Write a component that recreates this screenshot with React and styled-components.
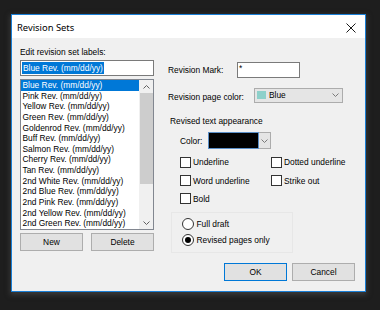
import React from "react";
import styled, { createGlobalStyle } from "styled-components";

const Global = createGlobalStyle`
  html, body { margin: 0; padding: 0; background: #1e1e1e; }
  body { width: 380px; height: 310px; overflow: hidden; font-family: "Liberation Sans", Arial, sans-serif; }
  * { box-sizing: border-box; }
`;

const UI_FONT = `font-family: "Liberation Sans", Arial, sans-serif; font-size: 8.4px; color: #000;`;

const Desktop = styled.div`
  padding: 14px 0 0 11px;
`;

const Dialog = styled.div`
  width: 355px;
  height: 278px;
  border: 1px solid #1a7fd6;
  background: #f0f0f0;
  display: flex;
  flex-direction: column;
  box-shadow: 0 2px 5px 1px rgba(80, 80, 80, 0.55);
`;

const TitleBar = styled.div`
  height: 23px;
  background: #fff;
  display: flex;
  align-items: center;
  justify-content: space-between;
  padding: 0 9px 0 5px;
`;

const Title = styled.div`
  font-family: "Noto Sans", "Liberation Sans", sans-serif;
  font-size: 9.4px;
  color: #000;
  padding-top: 1px;
`;

const CloseIcon = styled.svg`
  width: 10px;
  height: 10px;
  margin-top: 2px;
`;

const Body = styled.div`
  flex: 1;
  display: flex;
  gap: 14px;
  padding: 0 10px 0 8px;
`;

const LeftCol = styled.div`
  width: 134px;
  padding-top: 9px;
  display: flex;
  flex-direction: column;
`;

const Label = styled.div`
  ${UI_FONT}
  line-height: 11px;
  height: 11px;
  white-space: nowrap;
  padding-left: ${(p) => p.$indent || 0}px;
  margin-top: ${(p) => p.$mt || 0}px;
`;

const TextBox = styled.div`
  ${UI_FONT}
  margin-top: ${(p) => p.$mt || 0}px;
  width: ${(p) => (p.$w ? `${p.$w}px` : "auto")};
  height: 16px;
  border: 1px solid #7a7a7a;
  background: #fff;
  display: flex;
  align-items: ${(p) => (p.$top ? "flex-start" : "center")};
  padding-left: 1px;
`;

const Selected = styled.span`
  background: #0078d7;
  color: #fff;
  line-height: 12px;
  padding: 0 1px;
`;

const ListBox = styled.div`
  margin-top: 3px;
  height: 151px;
  border: 1px solid #828790;
  background: #fff;
  display: flex;
`;

const Items = styled.div`
  flex: 1;
  display: flex;
  flex-direction: column;
  overflow: hidden;
`;

const Item = styled.div`
  ${UI_FONT}
  height: 10.64px;
  line-height: 10.64px;
  padding-left: 1.5px;
  white-space: nowrap;
  background: ${(p) => (p.$sel ? "#0078d7" : "transparent")};
  color: ${(p) => (p.$sel ? "#fff" : "#000")};
`;

const ScrollBar = styled.div`
  width: 14px;
  background: #f0f0f0;
  display: flex;
  flex-direction: column;
  align-items: center;
`;

const ArrowCell = styled.div`
  height: 13px;
  width: 100%;
  display: flex;
  align-items: center;
  justify-content: center;
`;

const Thumb = styled.div`
  width: 13px;
  height: 91px;
  background: #cdcdcd;
`;

const Spacer = styled.div`
  flex: 1;
`;

const ButtonRow = styled.div`
  margin-top: ${(p) => p.$mt || 0}px;
  display: flex;
  justify-content: ${(p) => p.$justify || "space-between"};
  gap: ${(p) => p.$gap || 0}px;
`;

const Button = styled.div`
  ${UI_FONT}
  width: 63px;
  height: 18px;
  background: #e1e1e1;
  border: 1px solid ${(p) => (p.$default ? "#0078d7" : "#adadad")};
  display: flex;
  align-items: center;
  justify-content: center;
`;

const RightCol = styled.div`
  flex: 1;
  padding-top: 24px;
  display: flex;
  flex-direction: column;
`;

const FieldRow = styled.div`
  display: flex;
  align-items: center;
  height: ${(p) => p.$h || 16}px;
  margin-top: ${(p) => p.$mt || 0}px;
  padding-left: ${(p) => p.$indent || 0}px;
`;

const FieldLabel = styled.div`
  ${UI_FONT}
  width: ${(p) => p.$w}px;
  white-space: nowrap;
  padding-top: ${(p) => p.$dy || 0}px;
`;

const Select = styled.div`
  ${UI_FONT}
  width: 89px;
  height: 15px;
  background: #e5e5e5;
  border: 1px solid #acacac;
  display: flex;
  align-items: center;
  padding: 0 3px 0 2px;
`;

const Swatch = styled.div`
  width: 9px;
  height: 8px;
  background: ${(p) => p.$color};
  margin-right: 3px;
`;

const ColorCombo = styled.div`
  display: flex;
  height: 17px;
  width: 63px;
`;

const ColorFill = styled.div`
  width: 51px;
  height: 100%;
  background: #000;
  border: 1px solid #5b8fc7;
`;

const ComboArrow = styled.div`
  flex: 1;
  height: 100%;
  background: #e5e5e5;
  border: 1px solid #acacac;
  border-left: none;
  display: flex;
  align-items: center;
  justify-content: center;
`;

const CheckGrid = styled.div`
  margin-top: 4px;
  padding-left: 12px;
  display: grid;
  grid-template-columns: 91px auto;
  grid-auto-rows: 18.4px;
  align-items: center;
`;

const CheckItem = styled.div`
  ${UI_FONT}
  display: flex;
  align-items: center;
  gap: 2px;
  white-space: nowrap;
`;

const CheckBox = styled.div`
  width: 11px;
  height: 11px;
  border: 1px solid #333;
  background: #fff;
`;

const GroupBox = styled.div`
  margin: 4px 0 0 3px;
  width: 122px;
  height: 41px;
  border: 1px solid #e7e7e7;
  padding: 3px 0 0 10px;
  display: flex;
  flex-direction: column;
`;

const RadioItem = styled.div`
  ${UI_FONT}
  height: 16px;
  display: flex;
  align-items: center;
  gap: 2.5px;
  white-space: nowrap;
`;

const RadioCircle = styled.div`
  width: 12px;
  height: 12px;
  border-radius: 50%;
  border: 1px solid #333;
  background: #fff;
  display: flex;
  align-items: center;
  justify-content: center;
  &::after {
    content: "";
    display: ${(p) => (p.$checked ? "block" : "none")};
    width: 6px;
    height: 6px;
    border-radius: 50%;
    background: #000;
  }
`;

const Chevron = ({ up, color = "#606060" }) => (
  <svg width="7" height="4" viewBox="0 0 7 4">
    <polyline
      points={up ? "0.5,3.5 3.5,0.5 6.5,3.5" : "0.5,0.5 3.5,3.5 6.5,0.5"}
      fill="none"
      stroke={color}
      strokeWidth="1"
    />
  </svg>
);

const items = [
  "Blue Rev. (mm/dd/yy)",
  "Pink Rev. (mm/dd/yy)",
  "Yellow Rev. (mm/dd/yy)",
  "Green Rev. (mm/dd/yy)",
  "Goldenrod Rev. (mm/dd/yy)",
  "Buff Rev. (mm/dd/yy)",
  "Salmon Rev. (mm/dd/yy)",
  "Cherry Rev. (mm/dd/yy)",
  "Tan Rev. (mm/dd/yy)",
  "2nd White Rev. (mm/dd/yy)",
  "2nd Blue Rev. (mm/dd/yy)",
  "2nd Pink Rev. (mm/dd/yy)",
  "2nd Yellow Rev. (mm/dd/yy)",
  "2nd Green Rev. (mm/dd/yy)",
];

export default function App() {
  return (
    <>
      <Global />
      <Desktop>
        <Dialog>
          <TitleBar>
            <Title>Revision Sets</Title>
            <CloseIcon viewBox="0 0 10 10">
              <path d="M0.5 0.5 L9.5 9.5 M9.5 0.5 L0.5 9.5" stroke="#1a1a1a" strokeWidth="1" fill="none" />
            </CloseIcon>
          </TitleBar>
          <Body>
            <LeftCol>
              <Label>Edit revision set labels:</Label>
              <TextBox $mt={2}>
                <Selected>Blue Rev. (mm/dd/yy)</Selected>
              </TextBox>
              <ListBox>
                <Items>
                  {items.map((t, i) => (
                    <Item key={t} $sel={i === 0}>
                      {t}
                    </Item>
                  ))}
                </Items>
                <ScrollBar>
                  <ArrowCell>
                    <Chevron up />
                  </ArrowCell>
                  <Thumb />
                  <Spacer />
                  <ArrowCell>
                    <Chevron />
                  </ArrowCell>
                </ScrollBar>
              </ListBox>
              <ButtonRow $mt={3}>
                <Button>New</Button>
                <Button>Delete</Button>
              </ButtonRow>
            </LeftCol>
            <RightCol>
              <FieldRow>
                <FieldLabel $w={69}>Revision Mark:</FieldLabel>
                <TextBox $w={63} $top>
                  <span>*</span>
                </TextBox>
              </FieldRow>
              <FieldRow $mt={9}>
                <FieldLabel $w={86} $dy={3}>Revision page color:</FieldLabel>
                <Select>
                  <Swatch $color="#8dd0ca" />
                  <span>Blue</span>
                  <Spacer />
                  <Chevron color="#7a7a7a" />
                </Select>
              </FieldRow>
              <Label $mt={13} $indent={2}>Revised text appearance</Label>
              <FieldRow $mt={5} $h={17} $indent={12}>
                <FieldLabel $w={28}>Color:</FieldLabel>
                <ColorCombo>
                  <ColorFill />
                  <ComboArrow>
                    <Chevron color="#7a7a7a" />
                  </ComboArrow>
                </ColorCombo>
              </FieldRow>
              <CheckGrid>
                <CheckItem>
                  <CheckBox />
                  Underline
                </CheckItem>
                <CheckItem>
                  <CheckBox />
                  Dotted underline
                </CheckItem>
                <CheckItem>
                  <CheckBox />
                  Word underline
                </CheckItem>
                <CheckItem>
                  <CheckBox />
                  Strike out
                </CheckItem>
                <CheckItem>
                  <CheckBox />
                  Bold
                </CheckItem>
              </CheckGrid>
              <GroupBox>
                <RadioItem>
                  <RadioCircle />
                  Full draft
                </RadioItem>
                <RadioItem>
                  <RadioCircle $checked />
                  Revised pages only
                </RadioItem>
              </GroupBox>
              <ButtonRow $mt={10} $justify="flex-end" $gap={5}>
                <Button $default>OK</Button>
                <Button>Cancel</Button>
              </ButtonRow>
            </RightCol>
          </Body>
        </Dialog>
      </Desktop>
    </>
  );
}
